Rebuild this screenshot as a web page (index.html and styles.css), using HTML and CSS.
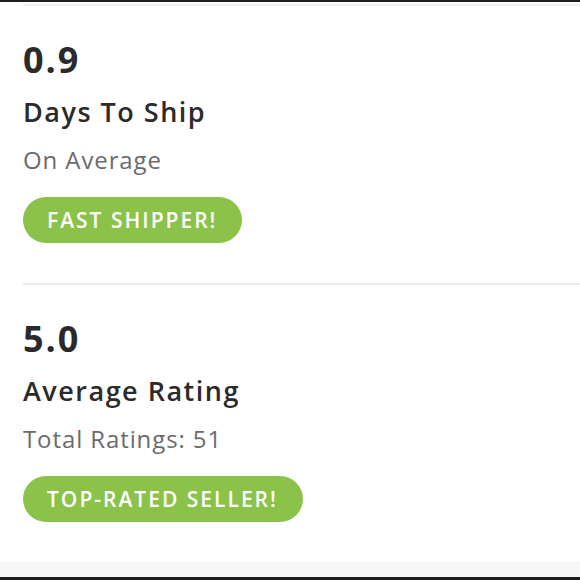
FILE: index.html
```html
<!DOCTYPE html>
<html lang="en">
<head>
<meta charset="utf-8">
<title>Seller Stats</title>
<link rel="stylesheet" href="styles.css">
</head>
<body>
<div class="page">
  <div class="stats">
    <section class="stat">
      <div class="value">0.9</div>
      <div class="label">Days To Ship</div>
      <div class="sub">On Average</div>
      <span class="badge">FAST SHIPPER!</span>
    </section>
    <section class="stat">
      <div class="value">5.0</div>
      <div class="label">Average Rating</div>
      <div class="sub">Total Ratings: 51</div>
      <span class="badge">TOP-RATED SELLER!</span>
    </section>
  </div>
  <div class="footer"></div>
</div>
</body>
</html>
```

FILE: styles.css
```css
html, body {
  margin: 0;
  padding: 0;
  background: #ffffff;
}
.page {
  box-sizing: border-box;
  height: 580px;
  border-top: 2px solid #1e1e1e;
  border-bottom: 3px solid #1e1e1e;
  display: flex;
  flex-direction: column;
  font-family: "Open Sans", "Liberation Sans", sans-serif;
  color: #2a2a2a;
}
.stats {
  padding-top: 2px;
}
.stat {
  margin-left: 23px;
  border-top: 2px solid #f1f1f1;
  height: 279px;
  box-sizing: border-box;
  padding-top: 34px;
  display: flex;
  flex-direction: column;
  align-items: flex-start;
}
.stat + .stat {
  border-top-color: #ececec;
}
.value {
  font-size: 36px;
  font-weight: 700;
  line-height: 40px;
  letter-spacing: 2px;
}
.label {
  margin-top: 16px;
  font-size: 27px;
  font-weight: 600;
  line-height: 32px;
  letter-spacing: 1.5px;
  color: #2b2b2b;
}
.sub {
  margin-top: 18px;
  font-size: 24px;
  line-height: 28px;
  color: #6b6b6b;
  letter-spacing: 0.9px;
}
.badge {
  margin-top: 23px;
  height: 46px;
  line-height: 46px;
  padding: 0 25px 0 24px;
  border-radius: 23px;
  background: #8bc34a;
  color: #ffffff;
  font-size: 21px;
  font-weight: 600;
  letter-spacing: 2px;
}
.footer {
  height: 15px;
  background: #f7f7f7;
}
```
